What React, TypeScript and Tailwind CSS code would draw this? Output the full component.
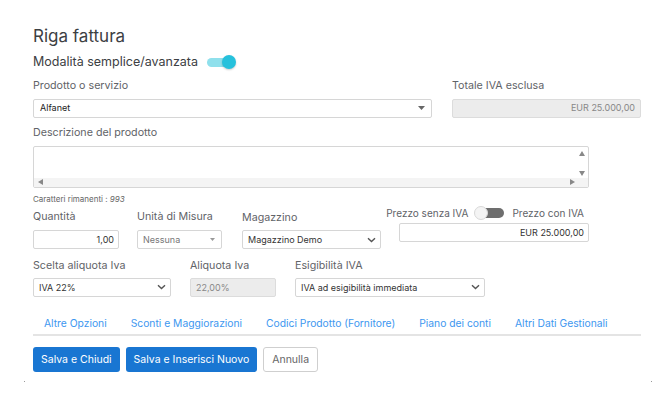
import React from "react";

const font = { fontFamily: "Inter, 'Open Sans', sans-serif" };

const Caret = () => (
  <svg width="7" height="4" viewBox="0 0 7 4" className="shrink-0">
    <path d="M0 0h7L3.5 4z" fill="#666" />
  </svg>
);

const Chevron = () => (
  <svg width="9" height="6" viewBox="0 0 9 6" className="shrink-0">
    <path d="M1 1.2l3.5 3.4L8 1.2" stroke="#555" strokeWidth="1.4" fill="none" />
  </svg>
);

const Label = ({ children, className = "" }: { children: React.ReactNode; className?: string }) => (
  <div className={`text-[10.7px] text-[#5f6368] leading-none whitespace-nowrap ${className}`}>{children}</div>
);

const tabs = ["Altre Opzioni", "Sconti e Maggiorazioni", "Codici Prodotto (Fornitore)", "Piano dei conti", "Altri Dati Gestionali"];

export default function App() {
  return (
    <div className="w-[664px] h-[397px] bg-white relative overflow-hidden text-[#333]" style={font}>
      <div className="pl-[33px] pr-[23px] pt-[26px]">
        <h1 className="text-[17px] leading-[20px] text-[#3c4043]">Riga fattura</h1>

        <div className="flex items-center mt-[9px] h-[14px]">
          <span className="text-[12.5px] text-[#3c4043]">Modalità semplice/avanzata</span>
          <div className="relative ml-[9px] w-[29px] h-[12px]">
            <div className="absolute left-0 top-[2px] w-[26px] h-[9px] rounded-full bg-[#8fe0ec]" />
            <div className="absolute right-0 top-[-1px] w-[14px] h-[14px] rounded-full bg-[#26c1dc] shadow-[0_1px_2px_rgba(0,0,0,0.2)]" />
          </div>
        </div>

        <div className="flex mt-[12px]">
          <div className="w-[399px]">
            <Label>Prodotto o servizio</Label>
            <div className="mt-[7px] h-[19px] border border-[#d6d6d6] rounded-[2px] flex items-center justify-between pl-[6px] pr-[6px]">
              <span className="text-[9px] text-[#222]">Alfanet</span>
              <Caret />
            </div>
          </div>
          <div className="ml-[20px] w-[189px]">
            <Label>Totale IVA esclusa</Label>
            <div className="mt-[7px] h-[19px] border border-[#dcdcdc] bg-[#ececec] rounded-[2px] flex items-center justify-end pr-[5px]">
              <span className="text-[9px] text-[#888]">EUR 25.000,00</span>
            </div>
          </div>
        </div>

        <Label className="mt-[10px]">Descrizione del prodotto</Label>
        <div className="mt-[8px] w-[556px] h-[42px] border border-[#d6d6d6] rounded-[2px] relative">
          <div className="absolute left-0 right-0 bottom-0 h-[9px] bg-[#f4f4f4]" />
          <svg className="absolute left-[4px] bottom-[2px]" width="5" height="6" viewBox="0 0 5 6"><path d="M5 0v6L0 3z" fill="#888" /></svg>
          <svg className="absolute right-[13px] bottom-[2px]" width="5" height="6" viewBox="0 0 5 6"><path d="M0 0v6l5-3z" fill="#888" /></svg>
          <svg className="absolute right-[3px] top-[4px]" width="6" height="5" viewBox="0 0 6 5"><path d="M0 5h6L3 0z" fill="#888" /></svg>
          <svg className="absolute right-[3px] top-[24px]" width="6" height="5" viewBox="0 0 6 5"><path d="M0 0h6L3 5z" fill="#888" /></svg>
        </div>
        <div className="mt-[7px] text-[8px] text-[#666] leading-none">
          Caratteri rimanenti : <i>993</i>
        </div>

        <div className="flex mt-[3px]">
          <div className="w-[86px]">
            <Label className="mt-[6px]">Quantità</Label>
            <div className="mt-[7px] h-[19px] border border-[#d6d6d6] rounded-[2px] flex items-center justify-end pr-[4px]">
              <span className="text-[9px] text-[#333]">1,00</span>
            </div>
          </div>
          <div className="ml-[18px] w-[85px]">
            <Label className="mt-[6px]">Unità di Misura</Label>
            <div className="mt-[7px] h-[19px] border border-[#d6d6d6] rounded-[2px] flex items-center justify-between pl-[5px] pr-[6px]">
              <span className="text-[9px] text-[#777]">Nessuna</span>
              <svg width="5" height="3" viewBox="0 0 5 3"><path d="M0 0h5L2.5 3z" fill="#999" /></svg>
            </div>
          </div>
          <div className="ml-[20px] w-[139px]">
            <Label className="mt-[7px]">Magazzino</Label>
            <div className="mt-[6px] h-[19px] border border-[#d6d6d6] rounded-[2px] flex items-center justify-between pl-[5px] pr-[4px]">
              <span className="text-[9px] text-[#333]">Magazzino Demo</span>
              <Chevron />
            </div>
          </div>
          <div className="ml-[18px] w-[190px]">
            <div className="flex items-center justify-end h-[14px] pr-[5px] text-[10px] text-[#5f6368] whitespace-nowrap">
              <span>Prezzo senza IVA</span>
              <div className="relative ml-[6px] mr-[8px] w-[30px] h-[14px] shrink-0">
                <div className="absolute left-[3px] top-[2px] w-[27px] h-[10px] rounded-full bg-[#6e6e6e]" />
                <div className="absolute left-0 top-0 w-[14px] h-[14px] rounded-full bg-[#f4f4f4] border border-[#d8d8d8]" />
              </div>
              <span>Prezzo con IVA</span>
            </div>
            <div className="mt-[3px] h-[19px] border border-[#d6d6d6] rounded-[2px] flex items-center justify-end pr-[4px]">
              <span className="text-[9px] text-[#333]">EUR 25.000,00</span>
            </div>
          </div>
        </div>

        <div className="flex mt-[12px]">
          <div className="w-[138px]">
            <Label>Scelta aliquota Iva</Label>
            <div className="mt-[6px] h-[19px] border border-[#d6d6d6] rounded-[2px] flex items-center justify-between pl-[5px] pr-[4px]">
              <span className="text-[9px] text-[#333]">IVA 22%</span>
              <Chevron />
            </div>
          </div>
          <div className="ml-[19px] w-[86px]">
            <Label>Aliquota Iva</Label>
            <div className="mt-[6px] h-[19px] border border-[#dcdcdc] bg-[#ececec] rounded-[2px] flex items-center pl-[5px]">
              <span className="text-[9px] text-[#888]">22,00%</span>
            </div>
          </div>
          <div className="ml-[19px] w-[190px]">
            <Label>Esigibilità IVA</Label>
            <div className="mt-[6px] h-[19px] border border-[#d6d6d6] rounded-[2px] flex items-center justify-between pl-[5px] pr-[4px]">
              <span className="text-[9px] text-[#333]">IVA ad esigibilità immediata</span>
              <Chevron />
            </div>
          </div>
        </div>

        <div className="mt-[21px] w-[608px] border-b-2 border-[#e4e4e4] flex pl-[11px] pb-[6px] gap-[24px] text-[10.3px] text-[#3d97f0] leading-none">
          {tabs.map((t) => (
            <span key={t}>{t}</span>
          ))}
        </div>

        <div className="flex gap-[6px] mt-[11px]">
          <button className="h-[25px] px-[8px] rounded-[3px] bg-[#1976d2] text-white text-[10.5px]">Salva e Chiudi</button>
          <button className="h-[25px] px-[8px] rounded-[3px] bg-[#1976d2] text-white text-[10.5px]">Salva e Inserisci Nuovo</button>
          <button className="h-[25px] px-[8px] rounded-[3px] border border-[#cfcfcf] bg-white text-[#666] text-[10.5px]">Annulla</button>
        </div>
      </div>
      <div className="absolute left-[24px] top-[381px] w-[1px] h-[1px] bg-[#999]" />
      <div className="absolute left-[651px] top-[381px] w-[1px] h-[1px] bg-[#999]" />
    </div>
  );
}
